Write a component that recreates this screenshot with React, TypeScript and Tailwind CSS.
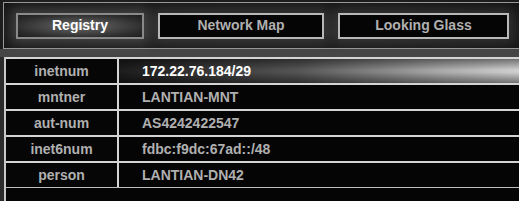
import React from "react";

const rows: { key: string; value: string; active?: boolean }[] = [
  { key: "inetnum", value: "172.22.76.184/29", active: true },
  { key: "mntner", value: "LANTIAN-MNT" },
  { key: "aut-num", value: "AS4242422547" },
  { key: "inet6num", value: "fdbc:f9dc:67ad::/48" },
  { key: "person", value: "LANTIAN-DN42" },
];

const tabs = [
  { label: "Registry", width: "w-[128px]", active: true },
  { label: "Network Map", width: "w-[166px]" },
  { label: "Looking Glass", width: "w-[171px]" },
];

export default function App() {
  return (
    <div
      className="w-[519px] h-[201px] overflow-hidden bg-[#2c2c2c] font-bold text-[14px] text-[#b0b0b0]"
      style={{ fontFamily: '"Liberation Sans", Arial, sans-serif' }}
    >
      {/* Top navigation frame */}
      <div className="pt-[2px] pl-[3px] bg-[#1c1c1c]">
        <div className="h-[47px] w-[530px] border border-r-0 border-[#9a9a9a] bg-[radial-gradient(ellipse_at_50%_60%,#2a2a2a,#141414)] flex items-center pl-[12px] gap-[14px]">
          {tabs.map((t) =>
            t.active ? (
              <div
                key={t.label}
                className={`${t.width} h-[26px] flex items-center justify-center border-2 border-[#8a8a8a] bg-[radial-gradient(ellipse_at_center,#6a6a6a,#2c2c2c_75%,#1e1e1e)] text-white shadow-[0_0_12px_5px_rgba(110,110,110,0.45)]`}
              >
                {t.label}
              </div>
            ) : (
              <div
                key={t.label}
                className={`${t.width} h-[26px] flex items-center justify-center border-2 border-[#b8b8b8] bg-[#050505] shadow-[0_0_10px_4px_rgba(90,90,90,0.35)]`}
              >
                {t.label}
              </div>
            )
          )}
        </div>
      </div>

      {/* Spacer band */}
      <div className="h-[8px] bg-[#464646]" />

      {/* Registry table */}
      <div className="ml-[4px] h-[200px] bg-[#050505] border-l-2 border-[#c8c8c8]">
        {rows.map((r) => (
          <div key={r.key} className="flex h-[26px] border-t-2 border-[#d4d4d4]">
            <div className="w-[113px] flex items-center justify-center bg-[#060606] border-r-2 border-[#d4d4d4]">
              {r.key}
            </div>
            <div
              className={`flex-1 flex items-center pl-[23px] ${
                r.active
                  ? "text-white bg-[linear-gradient(to_bottom,rgba(0,0,0,0.45),rgba(0,0,0,0)_45%,rgba(0,0,0,0)_55%,rgba(0,0,0,0.45)),linear-gradient(to_right,#1c1c1c,#555_45%,#a8a8a8_80%,#d0d0d0)]"
                  : "bg-[#050505]"
              }`}
            >
              {r.value}
            </div>
          </div>
        ))}
        <div className="h-px bg-[#bdbdbd]" />
      </div>
    </div>
  );
}
